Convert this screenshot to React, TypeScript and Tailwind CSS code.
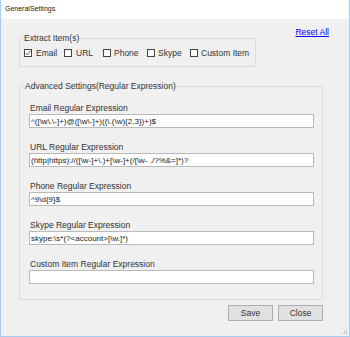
const fields = [
    { label: "Email Regular Expression", value: "^([\\w\\.\\-]+)@([\\w\\-]+)((\\.(\\w){2,3})+)$" },
    { label: "URL Regular Expression", value: "(http|https)://([\\w-]+\\.)+[\\w-]+(/[\\w- ./?%&=]*)?" },
    { label: "Phone Regular Expression", value: "^9\\d{9}$" },
    { label: "Skype Regular Expression", value: "skype:\\s*(?<account>[\\w.]*)" },
    { label: "Custom Item Regular Expression", value: "" },
];

const Check = ({ checked }: { checked?: boolean }) => (
    <span className="w-[8px] h-[8px] border border-[#444] bg-white flex items-center justify-center shrink-0">
        {checked && (
            <svg width="6" height="6" viewBox="0 0 6 6">
                <polyline points="0.6,3 2.3,4.8 5.4,1" fill="none" stroke="#444" strokeWidth="0.9" />
            </svg>
        )}
    </span>
);

export default function App() {
    return (
        <div className="w-[350px] h-[337px] flex flex-col border-x border-b border-[#a6cdf0] font-['Liberation_Sans',Arial,sans-serif] text-[#333]">
            {/* Title bar */}
            <div className="h-[19px] bg-white flex items-center pl-[4px] text-[7px] text-[#222] shrink-0">
                GeneralSettings
            </div>

            <div className="flex-1 bg-[#f0f0f0] relative flex flex-col">
                {/* Extract items + reset */}
                <div className="flex items-start">
                    <fieldset className="ml-[18px] mt-[14px] w-[237px] border border-[#dcdcdc] p-0">
                        <legend className="ml-[4px] text-[8.5px] leading-[10px]">Extract Item(s)</legend>
                        <div className="flex items-center pl-[4px] mt-[5px] mb-[8px] h-[10px] text-[8.5px] leading-[10px]">
                            <label className="flex items-center gap-[4px] w-[40px]"><Check checked />Email</label>
                            <label className="flex items-center gap-[4px] w-[39px]"><Check />URL</label>
                            <label className="flex items-center gap-[3px] w-[44px]"><Check />Phone</label>
                            <label className="flex items-center gap-[3px] w-[43px]"><Check />Skype</label>
                            <label className="flex items-center gap-[3px]"><Check />Custom Item</label>
                        </div>
                    </fieldset>
                    <a className="ml-auto mr-[20px] mt-[8px] text-[8.5px] leading-[10px] text-[#0000ff] underline">
                        Reset All
                    </a>
                </div>

                {/* Advanced settings */}
                <fieldset className="ml-[18px] mt-[14px] w-[304px] border border-[#dcdcdc] p-0">
                    <legend className="ml-[5px] text-[8.5px] leading-[10px]">Advanced Settings(Regular Expression)</legend>
                    <div className="pt-[12px] pb-[15px] pl-[9px] pr-[8px] flex flex-col gap-[14px]">
                        {fields.map((f) => (
                            <div key={f.label} className="flex flex-col">
                                <span className="pl-[1px] text-[8.5px] leading-[10px]">{f.label}</span>
                                <input
                                    type="text"
                                    defaultValue={f.value}
                                    className="mt-[1px] h-[14px] w-full bg-white border border-[#b9b9b9] px-[1px] text-[8px] leading-[12px] text-[#222] outline-none font-['Liberation_Sans',Arial,sans-serif]"
                                />
                            </div>
                        ))}
                    </div>
                </fieldset>

                {/* Buttons */}
                <div className="flex justify-end gap-[5px] mt-[5px] mr-[26px]">
                    <button className="w-[45px] h-[16px] bg-[#e1e1e1] border border-[#adadad] text-[8.5px] leading-[10px] text-[#333]">Save</button>
                    <button className="w-[45px] h-[16px] bg-[#e1e1e1] border border-[#adadad] text-[8.5px] leading-[10px] text-[#333]">Close</button>
                </div>

                {/* resize grip */}
                <svg className="absolute right-[1px] bottom-[1px]" width="6" height="6" viewBox="0 0 6 6">
                    <rect x="4" y="0" width="1" height="1" fill="#b0b0b0" />
                    <rect x="2" y="2" width="1" height="1" fill="#b0b0b0" />
                    <rect x="4" y="2" width="1" height="1" fill="#b0b0b0" />
                    <rect x="0" y="4" width="1" height="1" fill="#b0b0b0" />
                    <rect x="2" y="4" width="1" height="1" fill="#b0b0b0" />
                    <rect x="4" y="4" width="1" height="1" fill="#b0b0b0" />
                </svg>
            </div>
        </div>
    );
}
